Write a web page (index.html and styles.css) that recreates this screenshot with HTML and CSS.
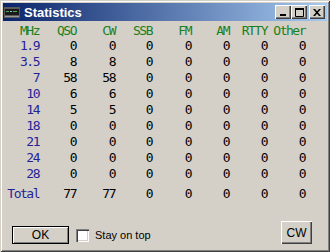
FILE: index.html
```html
<!DOCTYPE html>
<html lang="en">

<head>
  <meta charset="utf-8">
  <title>Statistics</title>
  <link rel="stylesheet" href="styles.css">
</head>

<body>
  <div class="window">
    <div class="titlebar">
      <svg class="appicon" width="16" height="11" viewBox="0 0 16 11">
        <rect x="0" y="0" width="16" height="11" fill="#5a5a5a"/>
        <rect x="1" y="2" width="14" height="6" fill="#1a1a1a"/>
        <rect x="2" y="4" width="3" height="1" fill="#4caf50"/>
        <rect x="6" y="4" width="2" height="1" fill="#80c0ff"/>
        <rect x="9" y="4" width="4" height="1" fill="#4caf50"/>
        <rect x="1" y="9" width="14" height="1" fill="#9a9a9a"/>
      </svg>
      <span class="title">Statistics</span>
      <div class="caption-buttons">
        <div class="cap-btn">
          <svg width="8" height="7" viewBox="0 0 8 7"><rect x="1" y="5" width="6" height="2" fill="#000"/></svg>
        </div>
        <div class="cap-btn">
          <svg width="9" height="9" viewBox="0 0 9 9"><path d="M0.5 1.5h8v7h-8z" fill="none" stroke="#000"/><rect x="0" y="0" width="9" height="2" fill="#000"/></svg>
        </div>
        <div class="cap-btn close">
          <svg width="8" height="7" viewBox="0 0 8 7"><path d="M0 0h2l2 2.2 2-2.2h2l-3 3.5 3 3.5h-2l-2-2.2-2 2.2h-2l3-3.5z" fill="#000"/></svg>
        </div>
      </div>
    </div>

    <div class="stats">
      <div class="row head">
        <span>MHz</span><span>QSO</span><span>CW</span><span>SSB</span><span>FM</span><span>AM</span><span>RTTY</span><span>Other</span>
      </div>
      <div class="row"><span class="band">1.9</span><span>0</span><span>0</span><span>0</span><span>0</span><span>0</span><span>0</span><span>0</span></div>
      <div class="row"><span class="band">3.5</span><span>8</span><span>8</span><span>0</span><span>0</span><span>0</span><span>0</span><span>0</span></div>
      <div class="row"><span class="band">7</span><span>58</span><span>58</span><span>0</span><span>0</span><span>0</span><span>0</span><span>0</span></div>
      <div class="row"><span class="band">10</span><span>6</span><span>6</span><span>0</span><span>0</span><span>0</span><span>0</span><span>0</span></div>
      <div class="row"><span class="band">14</span><span>5</span><span>5</span><span>0</span><span>0</span><span>0</span><span>0</span><span>0</span></div>
      <div class="row"><span class="band">18</span><span>0</span><span>0</span><span>0</span><span>0</span><span>0</span><span>0</span><span>0</span></div>
      <div class="row"><span class="band">21</span><span>0</span><span>0</span><span>0</span><span>0</span><span>0</span><span>0</span><span>0</span></div>
      <div class="row"><span class="band">24</span><span>0</span><span>0</span><span>0</span><span>0</span><span>0</span><span>0</span><span>0</span></div>
      <div class="row"><span class="band">28</span><span>0</span><span>0</span><span>0</span><span>0</span><span>0</span><span>0</span><span>0</span></div>
      <div class="row total"><span class="band">Total</span><span>77</span><span>77</span><span>0</span><span>0</span><span>0</span><span>0</span><span>0</span></div>
    </div>

    <div class="footer">
      <button class="btn default" type="button">OK</button>
      <label class="check"><span class="box"></span>Stay on top</label>
      <button class="btn mode" type="button">CW</button>
    </div>
  </div>
</body>

</html>
```

FILE: styles.css
```css
body {
  margin: 0;
}

.window {
  width: 330px;
  height: 252px;
  box-sizing: border-box;
  padding: 3px;
  background-color: #d4d0c8;
  box-shadow: inset 1px 1px 0 #d4d0c8, inset -1px -1px 0 #404040,
    inset 2px 2px 0 #fff, inset -2px -2px 0 #808080;
  display: flex;
  flex-direction: column;
}

.titlebar {
  height: 18px;
  display: flex;
  align-items: center;
  padding: 0 2px 0 1px;
  background: linear-gradient(to right, #0a246a, #a6caf0);
}

.appicon {
  margin-right: 4px;
}

.title {
  font-family: "Liberation Sans", Arial, sans-serif;
  font-weight: bold;
  font-size: 13px;
  color: #fff;
  flex: 1;
}

.caption-buttons {
  display: flex;
}

.cap-btn {
  width: 16px;
  height: 14px;
  box-sizing: border-box;
  background-color: #d4d0c8;
  box-shadow: inset 1px 1px 0 #fff, inset -1px -1px 0 #404040, inset -2px -2px 0 #808080;
  display: flex;
  align-items: center;
  justify-content: center;
}

.cap-btn.close {
  margin-left: 2px;
}

.stats {
  margin-top: 3px;
  font-family: "DejaVu Sans Mono", "Liberation Mono", monospace;
  font-size: 13px;
  letter-spacing: -1.5px;
}

.row {
  display: grid;
  grid-template-columns: 36px 37px 39px 37px 39px 38px 38px 38px;
  height: 16px;
  line-height: 16px;
  text-align: right;
}

.row.head {
  height: 14px;
  line-height: 14px;
  color: #18801c;
}

.row.total {
  margin-top: 4px;
}

.band {
  color: #24249a;
}

.footer {
  margin-top: auto;
  padding: 0 15px 5px 9px;
  display: flex;
  align-items: flex-end;
}

.btn {
  font-family: "Liberation Sans", Arial, sans-serif;
  font-size: 12px;
  color: #000;
  background-color: #d4d0c8;
  border: none;
  padding: 0;
  box-shadow: inset 1px 1px 0 #fff, inset -1px -1px 0 #404040, inset -2px -2px 0 #808080;
}

.btn.default {
  width: 57px;
  height: 18px;
  border: 1px solid #000;
  box-shadow: inset 1px 1px 0 #fff, inset -1px -1px 0 #808080;
}

.btn.mode {
  width: 31px;
  height: 23px;
  margin-left: auto;
}

.check {
  display: flex;
  align-items: center;
  margin-left: 7px;
  height: 18px;
  font-family: "Liberation Sans", Arial, sans-serif;
  font-size: 11px;
}

.box {
  width: 13px;
  height: 13px;
  box-sizing: border-box;
  margin-right: 6px;
  background-color: #fff;
  box-shadow: inset 1px 1px 0 #808080, inset 2px 2px 0 #404040, inset -1px -1px 0 #fff, inset -2px -2px 0 #d4d0c8;
}
```
